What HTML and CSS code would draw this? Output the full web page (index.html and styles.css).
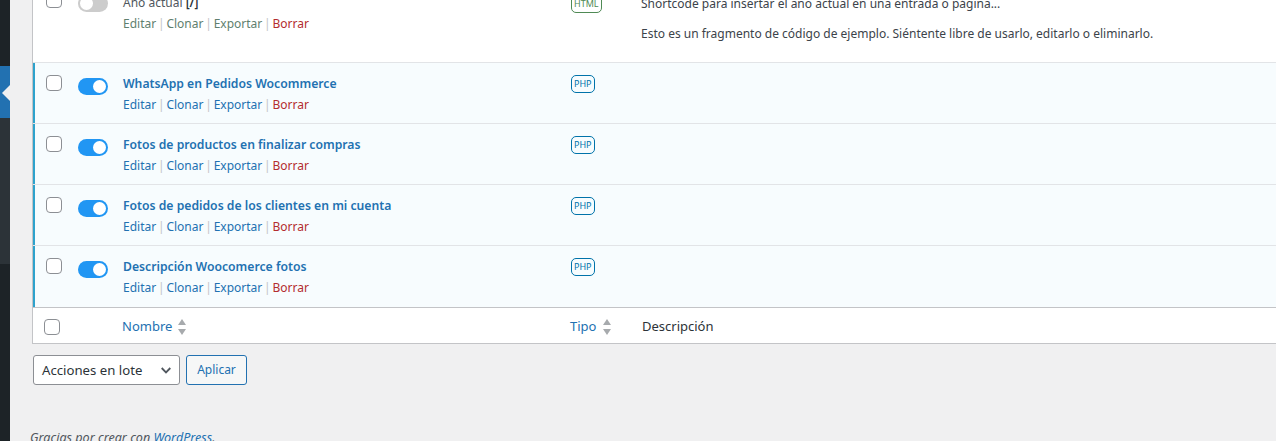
FILE: index.html
```html
<!DOCTYPE html>
<html lang="es">
<head>
<meta charset="utf-8">
<title>Fragmentos de código</title>
<link rel="stylesheet" href="styles.css">
</head>
<body>
<div class="page">
  <aside class="sidebar">
    <div class="side-top"></div>
    <div class="side-current"><span class="side-arrow"></span></div>
    <div class="side-sub"></div>
  </aside>
  <main class="content">
    <div class="table">
      <div class="row row-first">
        <div class="cell-check"><span class="checkbox"></span></div>
        <div class="cell-toggle"><span class="toggle"><span class="knob"></span></span></div>
        <div class="cell-name">
          <div class="name-plain">Año actual <span class="code">[/]</span></div>
          <div class="actions actions-muted"><a>Editar</a><i>|</i><a>Clonar</a><i>|</i><a>Exportar</a><i>|</i><b>Borrar</b></div>
        </div>
        <div class="cell-type"><span class="badge badge-html">HTML</span></div>
        <div class="cell-desc">
          <p>Shortcode para insertar el año actual en una entrada o página...</p>
          <p>Esto es un fragmento de código de ejemplo. Siéntente libre de usarlo, editarlo o eliminarlo.</p>
        </div>
      </div>
      <div class="row row-active">
        <div class="cell-check"><span class="checkbox"></span></div>
        <div class="cell-toggle"><span class="toggle toggle-on"><span class="knob"></span></span></div>
        <div class="cell-name">
          <a class="name">WhatsApp en Pedidos Wocommerce</a>
          <div class="actions"><a>Editar</a><i>|</i><a>Clonar</a><i>|</i><a>Exportar</a><i>|</i><b>Borrar</b></div>
        </div>
        <div class="cell-type"><span class="badge">PHP</span></div>
      </div>
      <div class="row row-active">
        <div class="cell-check"><span class="checkbox"></span></div>
        <div class="cell-toggle"><span class="toggle toggle-on"><span class="knob"></span></span></div>
        <div class="cell-name">
          <a class="name">Fotos de productos en finalizar compras</a>
          <div class="actions"><a>Editar</a><i>|</i><a>Clonar</a><i>|</i><a>Exportar</a><i>|</i><b>Borrar</b></div>
        </div>
        <div class="cell-type"><span class="badge">PHP</span></div>
      </div>
      <div class="row row-active">
        <div class="cell-check"><span class="checkbox"></span></div>
        <div class="cell-toggle"><span class="toggle toggle-on"><span class="knob"></span></span></div>
        <div class="cell-name">
          <a class="name">Fotos de pedidos de los clientes en mi cuenta</a>
          <div class="actions"><a>Editar</a><i>|</i><a>Clonar</a><i>|</i><a>Exportar</a><i>|</i><b>Borrar</b></div>
        </div>
        <div class="cell-type"><span class="badge">PHP</span></div>
      </div>
      <div class="row row-active row-last">
        <div class="cell-check"><span class="checkbox"></span></div>
        <div class="cell-toggle"><span class="toggle toggle-on"><span class="knob"></span></span></div>
        <div class="cell-name">
          <a class="name">Descripción Woocomerce fotos</a>
          <div class="actions"><a>Editar</a><i>|</i><a>Clonar</a><i>|</i><a>Exportar</a><i>|</i><b>Borrar</b></div>
        </div>
        <div class="cell-type"><span class="badge">PHP</span></div>
      </div>
      <div class="row-foot">
        <div class="foot-check"><span class="checkbox"></span></div>
        <div class="foot-name"><a>Nombre</a><span class="sort"><span class="up"></span><span class="down"></span></span></div>
        <div class="foot-type"><a>Tipo</a><span class="sort"><span class="up"></span><span class="down"></span></span></div>
        <div class="foot-desc">Descripción</div>
      </div>
    </div>
    <div class="bulk">
      <div class="select">Acciones en lote
        <svg class="chev" width="10" height="7" viewBox="0 0 10 7"><path d="M.7 1 5 5.4 9.3 1" fill="none" stroke="#50575e" stroke-width="1.8"/></svg>
      </div>
      <div class="button">Aplicar</div>
    </div>
    <div class="footer">Gracias por crear con <a>WordPress</a>.</div>
  </main>
</div>
</body>
</html>
```
FILE: styles.css
```css
* { box-sizing: border-box; }
html, body { margin: 0; height: 441px; overflow: hidden; }
body { background: #f0f0f1; color: #3c434a; font: 13px/19px "Noto Sans", "Open Sans", sans-serif; }
.page { display: flex; height: 441px; overflow: hidden; }
.sidebar { width: 10px; flex: none; background: #1d2327; display: flex; flex-direction: column; }
.side-top { height: 66px; }
.side-current { height: 52px; background: #2271b1; position: relative; }
.side-arrow { position: absolute; left: 2px; top: 19px; border: 8px solid transparent; border-left-width: 0; border-right-color: #f0f0f1; }
.side-sub { height: 146px; background: #2c3338; }
.content { flex: 1; min-width: 0; padding-left: 22px; }
.table { margin-top: -14px; width: 1300px; background: #fff; border: 1px solid #c3c4c7; border-top: 0; border-right: 0; }
.row { display: flex; height: 61px; border-bottom: 1px solid #e2e4e7; padding-top: 7px; }
.row-first { height: 77px; padding-top: 1px; }
.row-active { background: #f7fcfe; box-shadow: inset 2px 0 0 #2ea2cc; }
.row-last { height: 62px; border-bottom-color: #c3c4c7; }
.cell-check { width: 45px; padding: 5px 0 0 13px; }
.checkbox { display: block; width: 16px; height: 16px; background: #fff; border: 1px solid #8c8f94; border-radius: 4px; }
.cell-toggle { width: 44px; padding-top: 8px; }
.toggle { display: block; width: 30px; height: 17px; border-radius: 9px; background: #ccc; padding: 2px; }
.knob { display: block; width: 13px; height: 13px; border-radius: 50%; background: #fff; }
.toggle-on { background: #2196f3; }
.toggle-on .knob { margin-left: 13px; }
.cell-name { width: 449px; padding-left: 1px; }
.name { display: block; color: #2271b1; font-weight: 600; font-size: 12.2px; line-height: 19px; padding-top: 4px; }
.name-plain { color: #50575e; padding-top: 6px; font-size: 12px; }
.code { color: #2c3338; font-weight: 600; }
.actions { font-size: 12px; line-height: 19px; padding-top: 2px; color: #2271b1; }
.actions a { color: #2271b1; }
.actions-muted a { color: #5f7f6f; }
.actions i { font-style: normal; color: #c3c4c7; margin: 0 1.8px; }
.actions b { font-weight: 400; color: #b32d2e; }
.cell-type { width: 70px; padding-top: 3px; }
.badge { display: inline-block; height: 18px; padding: 0 2px; border: 1px solid #0073aa; border-radius: 5px; color: #0073aa; font-size: 9px; line-height: 16px; }
.badge-html { border-color: #4f8a55; color: #4f8a55; }
.row-first .cell-type { padding-top: 6px; }
.cell-desc { font-size: 12px; padding-top: 7px; }
.cell-desc p { margin: 0 0 11px; color: #3c434a; }
.row-foot { display: flex; align-items: center; height: 35px; padding-top: 2px; }
.foot-check { width: 44px; padding-left: 11px; }
.foot-name { width: 493px; padding-left: 45px; display: flex; align-items: center; }
.foot-type { width: 72px; display: flex; align-items: center; }
.foot-name a, .foot-type a { color: #2271b1; }
.foot-desc { color: #2c3338; }
.sort { display: flex; flex-direction: column; gap: 4px; margin-left: 6px; }
.foot-type .sort { margin-left: 7px; }
.up, .down { width: 0; height: 0; border: 4.5px solid transparent; border-top: 0; border-bottom: 6px solid #a7aaad; }
.down { border-bottom: 0; border-top: 6px solid #a7aaad; }
.bulk { display: flex; gap: 6px; margin-top: 11px; margin-left: 1px; }
.select { position: relative; width: 147px; height: 30px; background: #fff; border: 1px solid #8c8f94; border-radius: 3px; padding-left: 8px; line-height: 28px; color: #2c3338; font-size: 13.2px; }
.chev { position: absolute; right: 8px; top: 11px; }
.button { width: 61px; height: 30px; border: 1px solid #2271b1; border-radius: 3px; background: #f6f7f7; color: #2271b1; text-align: center; line-height: 28px; font-size: 12px; }
.footer { margin-top: 43px; margin-left: -2px; font-style: italic; color: #50575e; font-size: 12.6px; }
.footer a { color: #2271b1; }
```
